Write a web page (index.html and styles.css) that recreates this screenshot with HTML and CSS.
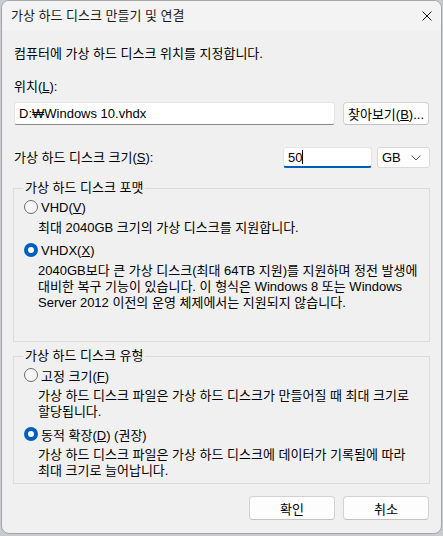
FILE: index.html
```html
<!DOCTYPE html>
<html lang="ko">

<head>
    <meta charset="UTF-8">
    <title>가상 하드 디스크 만들기 및 연결</title>
    <link rel="stylesheet" href="styles.css">
</head>

<body>
    <div class="window">
        <div class="titlebar">
            <span class="title">가상 하드 디스크 만들기 및 연결</span>
            <svg class="close" width="10" height="10" viewBox="0 0 10 10">
                <path d="M0.5 0.5 L9.5 9.5 M9.5 0.5 L0.5 9.5" stroke="#1a1a1a" stroke-width="1" fill="none" />
            </svg>
        </div>

        <div class="content">
            <p class="intro">컴퓨터에 가상 하드 디스크 위치를 지정합니다.</p>

            <p class="label">위치(<u>L</u>):</p>
            <div class="path-row">
                <div class="textbox path">D:₩Windows 10.vhdx</div>
                <button class="btn browse">찾아보기(<u>B</u>)...</button>
            </div>

            <div class="size-row">
                <span class="size-label">가상 하드 디스크 크기(<u>S</u>):</span>
                <div class="textbox size focused">50<span class="caret"></span></div>
                <div class="combo">
                    <span>GB</span>
                    <svg width="10" height="6" viewBox="0 0 10 6">
                        <path d="M0.5 0.5 L5 5 L9.5 0.5" stroke="#555" stroke-width="1" fill="none" />
                    </svg>
                </div>
            </div>

            <fieldset class="group format">
                <legend>가상 하드 디스크 포맷</legend>
                <div class="option">
                    <span class="radio"></span>
                    <span>VHD(<u>V</u>)</span>
                </div>
                <p class="desc">최대 2040GB 크기의 가상 디스크를 지원합니다.</p>
                <div class="option">
                    <span class="radio checked"></span>
                    <span>VHDX(<u>X</u>)</span>
                </div>
                <p class="desc">2040GB보다 큰 가상 디스크(최대 64TB 지원)를 지원하며 정전 발생에<br>대비한 복구 기능이 있습니다. 이 형식은 Windows 8 또는 Windows<br>Server 2012 이전의 운영 체제에서는 지원되지 않습니다.</p>
            </fieldset>

            <fieldset class="group type">
                <legend>가상 하드 디스크 유형</legend>
                <div class="option">
                    <span class="radio"></span>
                    <span>고정 크기(<u>F</u>)</span>
                </div>
                <p class="desc">가상 하드 디스크 파일은 가상 하드 디스크가 만들어질 때 최대 크기로<br>할당됩니다.</p>
                <div class="option">
                    <span class="radio checked"></span>
                    <span>동적 확장(<u>D</u>) (권장)</span>
                </div>
                <p class="desc">가상 하드 디스크 파일은 가상 하드 디스크에 데이터가 기록됨에 따라<br>최대 크기로 늘어납니다.</p>
            </fieldset>

            <div class="actions">
                <button class="btn">확인</button>
                <button class="btn">취소</button>
            </div>
        </div>
    </div>
</body>

</html>
```

FILE: styles.css
```css
body {
    margin: 0;
    padding: 0 0 0 1px;
    width: 443px;
    height: 536px;
    box-sizing: border-box;
    background-color: #c9cbd0;
    font-family: "Liberation Sans", "Noto Sans CJK KR", sans-serif;
    font-size: 13px;
    color: #000;
    overflow: hidden;
}

.window {
    width: 441px;
    height: 534px;
    box-sizing: border-box;
    border: 1px solid #a6a6a6;
    border-radius: 8px;
    background-color: #f0f0f0;
    overflow: hidden;
}

.titlebar {
    height: 30px;
    display: flex;
    align-items: center;
    justify-content: space-between;
    padding: 0 8px 0 9px;
    background-color: #f3f3f3;
}

.title {
    color: #1a1a1a;
    line-height: 16px;
}

.close {
    margin-right: 1px;
}

.content {
    padding: 0 12px;
}

p {
    margin: 0;
    line-height: 16px;
}

.intro {
    margin-top: 15px;
}

.label {
    margin-top: 17px;
}

.path-row {
    display: flex;
    gap: 8px;
    margin-top: 7px;
}

.textbox {
    box-sizing: border-box;
    background-color: #fff;
    border: 1px solid #e5e5e5;
    border-bottom-color: #8a8a8a;
    border-radius: 3px;
    padding: 0 4px;
    display: flex;
    align-items: center;
}

.path {
    width: 321px;
    height: 23px;
}

.btn {
    box-sizing: border-box;
    width: 86px;
    height: 24px;
    font: inherit;
    color: #000;
    background-color: #fdfdfd;
    border: 1px solid #d3d3d3;
    border-bottom-color: #c2c2c2;
    border-radius: 4px;
    padding: 0;
}

.browse {
    height: 23px;
}

.size-row {
    display: flex;
    align-items: center;
    margin-top: 22px;
    height: 21px;
}

.size-label {
    flex: 1;
    line-height: 16px;
}

.size {
    width: 89px;
    height: 21px;
    padding: 0 4px;
    border-bottom: 2px solid #005fb8;
}

.caret {
    display: inline-block;
    width: 1px;
    height: 14px;
    background-color: #000;
}

.combo {
    box-sizing: border-box;
    width: 53px;
    height: 21px;
    margin: 0 -1px 0 5px;
    background-color: #fdfdfd;
    border: 1px solid #d9d9d9;
    border-radius: 3px;
    display: flex;
    align-items: center;
    justify-content: space-between;
    padding: 0 8px 0 4px;
}

.group {
    margin: 12px -1px 0;
    padding: 0 0 0 10px;
    border: 1px solid #dcdcdc;
    min-width: 0;
}

.group legend {
    margin-left: -1px;
    padding: 0 2px;
    line-height: 16px;
}

.format {
    height: 162px;
    box-sizing: border-box;
}

.type {
    margin-top: 6px;
    padding-bottom: 4px;
}

.option {
    display: flex;
    align-items: center;
    gap: 3px;
    height: 16px;
    margin-top: 3px;
}

.desc {
    margin: 5px 0 0 14px;
}

.desc + .option {
    margin-top: 6px;
}

.radio {
    box-sizing: border-box;
    width: 14px;
    height: 14px;
    border-radius: 50%;
    border: 1px solid #6b6b6b;
    background-color: #f6f6f6;
}

.radio.checked {
    border: 4px solid #005fb8;
    background-color: #fff;
}

.actions {
    display: flex;
    justify-content: flex-end;
    gap: 8px;
    margin-top: 12px;
}
```
